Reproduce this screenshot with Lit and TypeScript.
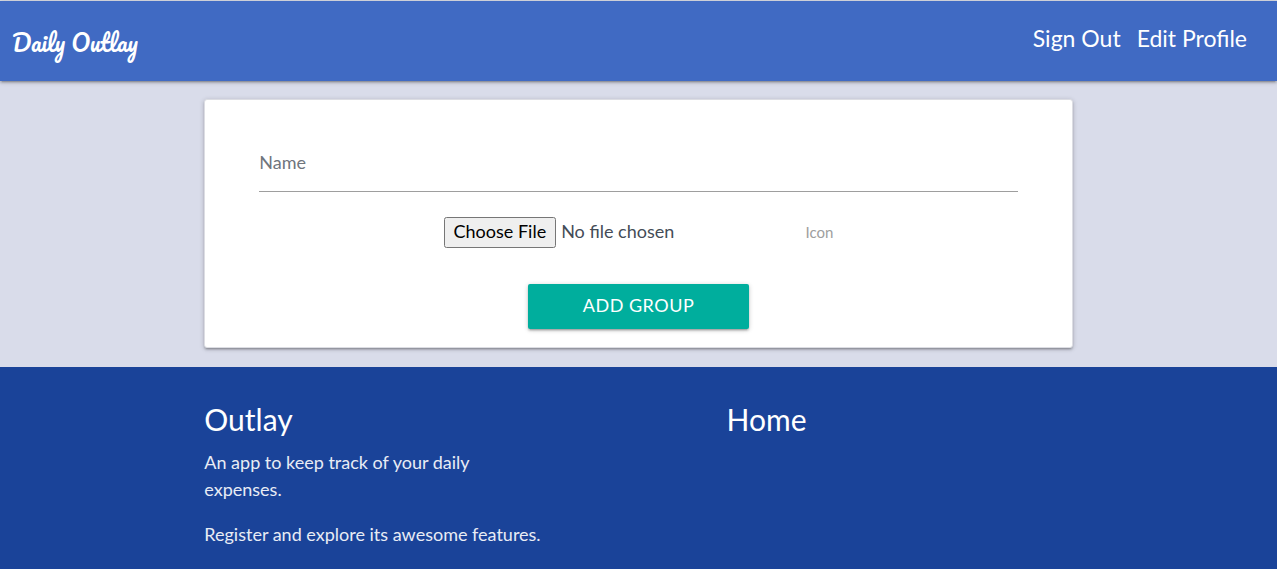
import { LitElement, html, css } from "lit";
import { customElement } from "lit/decorators.js";

@customElement("app-root")
export class AppRoot extends LitElement {
  static styles = css`
    :host {
      display: flex;
      flex-direction: column;
      min-height: 100vh;
      box-sizing: border-box;
      border-top: 1px solid #d9dce4;
      background: #d9dcea;
      color: #444c57;
      font: 18px/27px Lato, sans-serif;
    }
    *,
    *::before,
    *::after {
      box-sizing: border-box;
    }
    a {
      color: inherit;
      text-decoration: none;
    }
    .navbar {
      display: flex;
      justify-content: space-between;
      height: 80px;
      padding: 0 30px 0 12px;
      background: #406ac3;
      color: #fff;
      box-shadow: 0 2px 2px 0 rgba(0, 0, 0, 0.14),
        0 3px 1px -2px rgba(0, 0, 0, 0.12), 0 1px 5px 0 rgba(0, 0, 0, 0.2);
    }
    .brand {
      font: 400 23px/82px Pacifico, cursive;
    }
    .links {
      display: flex;
      gap: 16px;
      font-size: 23px;
      line-height: 74px;
    }
    .container {
      width: 68%;
      margin: 0 auto;
    }
    .card {
      display: flex;
      flex-direction: column;
      align-items: center;
      margin: 18px auto 19px;
      padding: 36px 54px 18px;
      border: 1px solid #dcdde3;
      border-radius: 3px;
      background: #fff;
      box-shadow: 0 2px 2px 0 rgba(0, 0, 0, 0.14),
        0 3px 1px -2px rgba(0, 0, 0, 0.12), 0 1px 5px 0 rgba(0, 0, 0, 0.2);
    }
    .name {
      width: 100%;
      height: 56px;
      padding: 0 0 4px;
      border: 0;
      border-bottom: 1px solid #9e9e9e;
      outline: 0;
      background: transparent;
      color: inherit;
      font: inherit;
    }
    .name::placeholder {
      color: #6f757d;
      opacity: 1;
    }
    .upload {
      display: flex;
      align-items: center;
      margin: 25px 0 36px;
    }
    .file {
      width: 362px;
      font: inherit;
      color: inherit;
    }
    .file::file-selector-button {
      height: 31px;
      margin-right: 5px;
      padding: 0 8px 3px;
      font: inherit;
    }
    .file-label {
      color: #9e9e9e;
      font-size: 15px;
    }
    .submit {
      height: 45px;
      padding: 0 55px 2px;
      border: 0;
      border-radius: 2px;
      background: #00ae9d;
      color: #fff;
      font: inherit;
      letter-spacing: 0.5px;
      text-transform: uppercase;
      box-shadow: 0 2px 2px 0 rgba(0, 0, 0, 0.14),
        0 3px 1px -2px rgba(0, 0, 0, 0.12), 0 1px 5px 0 rgba(0, 0, 0, 0.2);
    }
    .footer {
      flex: 1;
      padding: 34px 0 20px;
      background: #1a4399;
      color: #e8ecf5;
    }
    .columns {
      display: grid;
      grid-template-columns: repeat(12, 1fr);
      column-gap: 27px;
    }
    .about {
      grid-column: 1 / span 5;
    }
    .more {
      grid-column: 8 / span 5;
    }
    h2 {
      margin: 0 0 12px;
      color: #fff;
      font-size: 30px;
      font-weight: 400;
      line-height: 36px;
    }
    p {
      margin: 0 0 18px;
    }
  `;

  render() {
    return html`
      <nav class="navbar">
        <a class="brand" href="#">Daily Outlay</a>
        <div class="links">
          <a href="#">Sign Out</a>
          <a href="#">Edit Profile</a>
        </div>
      </nav>
      <main>
        <form class="card container">
          <input class="name" type="text" placeholder="Name" aria-label="Name" />
          <div class="upload">
            <input class="file" id="icon" type="file" />
            <label class="file-label" for="icon">Icon</label>
          </div>
          <button class="submit" type="button">Add Group</button>
        </form>
      </main>
      <footer class="footer">
        <div class="columns container">
          <section class="about">
            <h2>Outlay</h2>
            <p>An app to keep track of your daily expenses.</p>
            <p>Register and explore its awesome features.</p>
          </section>
          <section class="more">
            <h2><a href="#">Home</a></h2>
          </section>
        </div>
      </footer>
    `;
  }
}
